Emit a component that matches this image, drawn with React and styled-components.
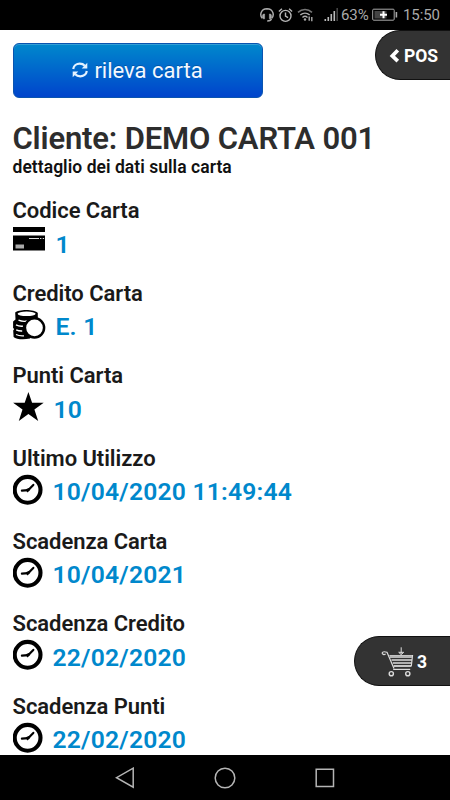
import styled, { createGlobalStyle } from "styled-components";

const CARD_FIELDS = [
    { label: "Codice Carta", value: "1", icon: "card", gap: 10 },
    { label: "Credito Carta", value: "E. 1", icon: "coins", gap: 10 },
    { label: "Punti Carta", value: "10", icon: "star", gap: 9 },
    { label: "Ultimo Utilizzo", value: "10/04/2020 11:49:44", icon: "clock", gap: 8 },
    { label: "Scadenza Carta", value: "10/04/2021", icon: "clock", gap: 8 },
    { label: "Scadenza Credito", value: "22/02/2020", icon: "clock", gap: 8 },
    { label: "Scadenza Punti", value: "22/02/2020", icon: "clock", gap: 8 },
];

const CreditCardIcon = () => (
    <svg width="33" height="32" viewBox="0 0 33 32">
        <path d="M0 1h32v5H0z" />
        <path d="M0 9.5h32v15H0z" />
        <path d="M16 12.5h10M27 12.5h1.4M29.7 12.5h1.4" stroke="#ddd" strokeWidth="1" />
        <path d="M2.5 18.5h8.5v4H2.5z" fill="#aaa" />
    </svg>
);

const CoinsIcon = () => (
    <svg width="33" height="32" viewBox="0 0 33 32">
        <path d="M2.2 3.6C5 0 22 0 24.8 4v6L17 29.6C10 31 3 30.3 .6 28L.2 21.5l1-1.5-1.1-1V12.5l2.4-2z" />
        <ellipse cx="13.6" cy="4.8" rx="9" ry="2.3" fill="#fff" />
        <path
            d="M5.5 11.2c3 1.2 6 1.4 9 .8M3 15.9c2 1.1 4.6 1.5 7 1.3M3.2 20.8c2 1 3.8 1.3 6 1.2M3 25.5c2.4 1.2 5 1.6 8 1.3"
            fill="none"
            stroke="#fff"
            strokeWidth="1.3"
        />
        <circle cx="21.5" cy="18.8" r="9.6" fill="#fff" stroke="#000" strokeWidth="2.5" />
    </svg>
);

const StarIcon = () => (
    <svg width="32" height="32" viewBox="0 0 32 32">
        <path d="M15.4 1l3.7 10.8h11.6l-9.3 6.8 3.8 11.5-9.8-7-9.6 7 3.7-11.5L.1 11.8h11.6z" />
    </svg>
);

const ClockIcon = () => (
    <svg width="32" height="32" viewBox="0 0 32 32">
        <circle cx="14.6" cy="15.8" r="12.9" fill="none" stroke="#000" strokeWidth="4.1" />
        <path
            d="M20.3 10.9l-5.2 5.3-6.2.4"
            fill="none"
            stroke="#000"
            strokeWidth="2.2"
            strokeLinecap="round"
            strokeLinejoin="round"
        />
        <path d="M12.5 15.4l3-1.4 1.8 1.8-2.9 2.6z" />
    </svg>
);

const FIELD_ICONS = {
    card: CreditCardIcon,
    coins: CoinsIcon,
    star: StarIcon,
    clock: ClockIcon,
};

const RefreshIcon = () => (
    <svg width="16" height="16" viewBox="0 0 16 16" fill="none" stroke="#e4f2ff" strokeWidth="2.2">
        <path d="M1.2 7C1.6 3.8 4.5 1.7 7.8 1.7c2 0 3.7.7 5 2.1M14.8 9c-.4 3.2-3.3 5.3-6.6 5.3-2 0-3.7-.7-5-2.1" />
        <path d="M15.3.8v5.6H9.7zM.7 15.2V9.6h5.6z" fill="#e4f2ff" stroke="none" />
    </svg>
);

const CartIcon = () => (
    <svg width="33" height="32" viewBox="0 0 33 32" fill="none" stroke="#dcdcdc" strokeWidth="1.2">
        <path d="M4.7 8.9c-1.4 1.3-3.8.3-3.5-1.1.4-1.6 3.2-1.1 4.8-.5l7 16.2" />
        <path d="M8.5 10.7h23l-1.2 10.3H12.5" />
        <path d="M9 11.7h22" stroke="#b5b5b5" strokeWidth="2.6" />
        <path d="M10.5 15H31M11.8 18h18.7M13 21h17" strokeWidth="1.5" />
        <path d="M12.2 24.4h17" />
        <circle cx="10.3" cy="28.7" r="2.1" strokeWidth="1.4" />
        <circle cx="26.8" cy="28.7" r="2.1" strokeWidth="1.4" />
        <path d="M20.2 2.3v6.5M17.7 7.3h5l-2.5 2.4z" strokeWidth="1" />
    </svg>
);

const HeadsetIcon = () => (
    <svg width="14" height="16" viewBox="0 0 14 16" fill="none" stroke="#aaa" strokeWidth="1.5">
        <path d="M2.3 11.2C-.6 8.2.7 2 7 1.8c6.3.2 7.6 6.4 4.7 9.4" />
        <path d="M4.6 7v4.8H3.2C2.2 11 2.2 7.8 3.4 7zM9.4 7v4.8h1.4c1-.8 1-4-.2-4.8z" fill="#aaa" strokeWidth=".6" />
        <path d="M11.4 11.6c-.2 1.8-1.7 2.3-4.2 2.3" />
    </svg>
);

const AlarmIcon = () => (
    <svg width="15" height="16" viewBox="0 0 15 16" fill="none" stroke="#b5b5b5" strokeWidth="1.4">
        <circle cx="7.5" cy="8.9" r="5.5" />
        <path d="M7.5 5.5v3.6l2.6 1.5M.9 4.4l3-2.7M14.1 4.4l-3-2.7" />
    </svg>
);

const WifiIcon = () => (
    <svg width="18" height="16" viewBox="0 0 18 16" fill="none" stroke="#aaa" strokeWidth="1.5">
        <path d="M1 5.4c4-3.8 10-3.8 14 0" stroke="#777" />
        <path d="M3.3 8c2.8-2.5 6.6-2.5 9.4 0M5.5 10.5c1.5-1.4 3.5-1.4 5 0" />
        <circle cx="8" cy="12.5" r="1.2" fill="#aaa" stroke="none" />
        <path d="M12.2 9.5v4.2M14.8 10v4.2" strokeWidth="1.4" />
    </svg>
);

const SignalIcon = () => (
    <svg width="15" height="16" viewBox="0 0 15 16">
        <path d="M.5 12h1.6v2H.5zM3.5 10h1.6v4H3.5zM6.5 7h1.6v7H6.5zM9.5 4h1.6v10H9.5z" fill="#bbb" />
        <path d="M12.4 1H14v13h-1.6z" fill="#444" />
    </svg>
);

const BatteryIcon = () => (
    <svg width="26" height="14" viewBox="0 0 26 14">
        <rect x=".7" y="1.2" width="21.5" height="11" rx="1" fill="none" stroke="#aaa" />
        <path d="M2.5 3h12v7.5h-12z" fill="#444" />
        <path d="M24.4 4v5.5" stroke="#aaa" strokeWidth="1.6" />
        <path d="M11.5 3.3v7M8 6.8h7" stroke="#fff" strokeWidth="2" />
    </svg>
);

const App = () => {
    return (
        <>
            <GlobalStyle />
            <Screen>
                <StatusBar>
                    <HeadsetIcon />
                    <StatusGap $size={4} />
                    <AlarmIcon />
                    <StatusGap $size={4} />
                    <WifiIcon />
                    <StatusGap $size={9} />
                    <SignalIcon />
                    <StatusGap $size={2} />
                    <StatusText $width={28} $size={15}>63%</StatusText>
                    <StatusGap $size={3} />
                    <BatteryIcon />
                    <StatusGap $size={5} />
                    <StatusText $width={37} $size={15}>15:50</StatusText>
                </StatusBar>

                <Content>
                    <ReadButton>
                        <RefreshIcon />
                        rileva carta
                    </ReadButton>

                    <Title>Cliente: DEMO CARTA 001</Title>
                    <Subtitle>dettaglio dei dati sulla carta</Subtitle>

                    <FieldList>
                        {CARD_FIELDS.map(({ label, value, icon, gap }) => {
                            const Icon = FIELD_ICONS[icon];
                            return (
                                <Field key={label}>
                                    <FieldLabel>{label}</FieldLabel>
                                    <FieldValue $gap={gap}>
                                        <Icon />
                                        <span>{value}</span>
                                    </FieldValue>
                                </Field>
                            );
                        })}
                    </FieldList>
                </Content>

                <NavBar>
                    <svg width="20" height="22" viewBox="0 0 20 22">
                        <path d="M18.2 1.2v19L1.5 10.7z" />
                    </svg>
                    <svg width="22" height="22" viewBox="0 0 22 22">
                        <circle cx="11" cy="11" r="9.8" />
                    </svg>
                    <svg width="20" height="20" viewBox="0 0 20 20">
                        <path d="M1.2 1.2h17.3v17.3H1.2z" />
                    </svg>
                </NavBar>

                <SideTab $top={30} $width={75} $pad={13}>
                    <svg width="11" height="16" viewBox="0 0 11 16">
                        <path d="M8.8 3.2L3.3 8.9l5.5 5.3" fill="none" stroke="#fff" strokeWidth="3.7" />
                    </svg>
                    <TabText $left={4}>POS</TabText>
                </SideTab>
                <SideTab $top={636} $width={96} $pad={26}>
                    <CartIcon />
                    <TabText $left={3}>3</TabText>
                </SideTab>
            </Screen>
        </>
    );
};

export default App;

// ======================= Styled Components =======================

const GlobalStyle = createGlobalStyle`
    * {
        box-sizing: border-box;
    }

    body {
        margin: 0;
        background: #fff;
        font-family: Roboto, "Liberation Sans", sans-serif;
    }

    svg {
        display: block;
        flex: none;
    }
`;

const Screen = styled.div`
    position: relative;
    width: 450px;
    height: 800px;
    display: flex;
    flex-direction: column;
    overflow: hidden;
    background: #fff;
`;

const StatusBar = styled.header`
    flex: none;
    height: 30px;
    padding-right: 10px;
    display: flex;
    justify-content: flex-end;
    align-items: center;
    background: #000;
`;

const StatusGap = styled.span`
    width: ${({ $size }) => $size}px;
`;

const StatusText = styled.span`
    width: ${({ $width }) => $width}px;
    font-size: ${({ $size }) => $size}px;
    line-height: 30px;
    letter-spacing: -0.1px;
    white-space: nowrap;
    color: #aaa;
`;

const Content = styled.main`
    flex: 1;
    min-height: 0;
    overflow: hidden;
    padding: 12.5px 12.5px 0;
`;

const ReadButton = styled.button`
    width: 250px;
    height: 55.5px;
    padding: 0;
    display: flex;
    justify-content: center;
    align-items: center;
    gap: 6px;
    border: 1px solid #0a54b0;
    border-radius: 6px;
    background: linear-gradient(to bottom, #0088cc, #0044cc);
    box-shadow: inset 0 1px 0 rgba(255, 255, 255, 0.2);
    color: #f4f8ff;
    font-family: inherit;
    font-size: 22px;
    text-shadow: 0 -1px 0 rgba(0, 0, 0, 0.2);
`;

const Title = styled.h1`
    margin: 23px 0 0;
    font-size: 31px;
    line-height: 36px;
    font-weight: 600;
    letter-spacing: -0.16px;
    white-space: nowrap;
    color: #2d2d2d;
`;

const Subtitle = styled.p`
    margin: 0;
    font-size: 17.5px;
    line-height: 20px;
    font-weight: 600;
    letter-spacing: 0.04px;
    color: #111;
`;

const FieldList = styled.div`
    margin-top: 20px;
`;

const Field = styled.section`
    height: 82.67px;
`;

const FieldLabel = styled.h2`
    margin: 0;
    font-size: 22px;
    line-height: 28px;
    font-weight: 600;
    letter-spacing: -0.05px;
    color: #1a1a1a;
`;

const FieldValue = styled.div`
    height: 34px;
    display: flex;
    align-items: center;
    gap: ${({ $gap }) => $gap}px;
    font-size: 24.7px;
    font-weight: 600;
    letter-spacing: 0.2px;
    color: #0088cc;

    span {
        padding-top: 4px;
    }
`;

const NavBar = styled.nav`
    flex: none;
    height: 45px;
    display: flex;
    justify-content: center;
    align-items: center;
    gap: 79px;
    background: #000;

    svg {
        fill: none;
        stroke: #b5b5b5;
        stroke-width: 1.5;
    }
`;

/* Dark tabs that float over the page, attached to the right edge */
const SideTab = styled.aside`
    position: absolute;
    top: ${({ $top }) => $top}px;
    right: 0;
    width: ${({ $width }) => $width}px;
    height: 50px;
    padding-left: ${({ $pad }) => $pad}px;
    display: flex;
    align-items: center;
    border: 1px solid #111;
    border-right: 0;
    border-radius: 25px 0 0 25px;
    background: #333;
`;

const TabText = styled.strong`
    margin-left: ${({ $left }) => $left}px;
    padding-top: 2px;
    font-size: 17.5px;
    font-weight: 700;
    color: #fff;
`;
